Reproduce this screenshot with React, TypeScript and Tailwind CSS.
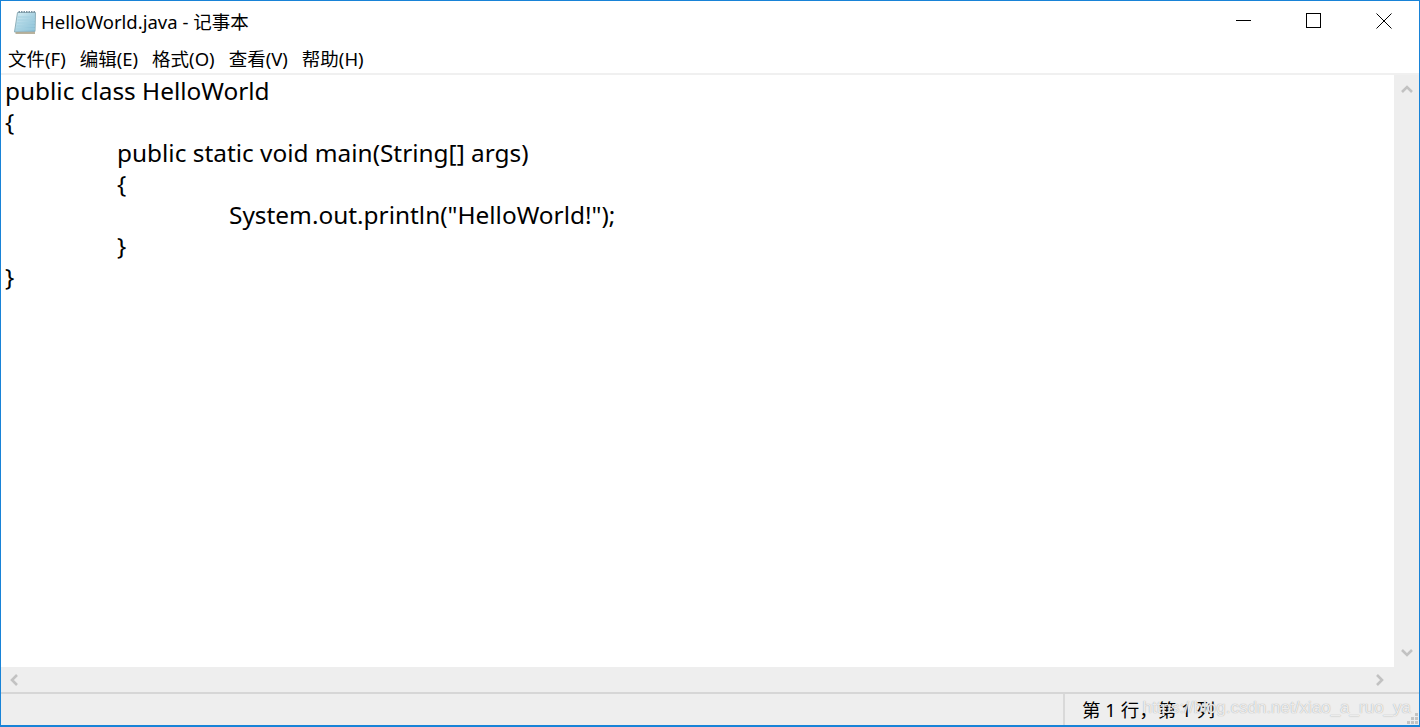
const lines = [
  { text: 'public class HelloWorld', indent: '' },
  { text: '{', indent: '' },
  { text: 'public static void main(String[] args)', indent: 'pl-[112px]' },
  { text: '{', indent: 'pl-[112px]' },
  { text: 'System.out.println("HelloWorld!");', indent: 'pl-[224px]' },
  { text: '}', indent: 'pl-[112px]' },
  { text: '}', indent: '' },
];

const menus = ['文件(F)', '编辑(E)', '格式(O)', '查看(V)', '帮助(H)'];

function NotepadIcon() {
  return (
    <svg width="24" height="26" viewBox="0 0 24 26" className="shrink-0">
      <defs>
        <linearGradient id="page" x1="0" y1="0" x2="1" y2="1">
          <stop offset="0" stopColor="#d8eff5" />
          <stop offset="1" stopColor="#7fb9d2" />
        </linearGradient>
      </defs>
      <path d="M4.5 3.5H22.5L22 22.5L1.5 23Z" fill="url(#page)" stroke="#8fb0ba" strokeWidth="1" />
      <path d="M2.5 24H22" stroke="#a89f85" strokeWidth="1.6" />
      <path d="M5.5 3H22.5" stroke="#7d97a5" strokeWidth="2" strokeDasharray="1.5 1" />
      <path d="M5 8H22M4.5 11H22M4 14H22M3.6 17H22M3.2 20H22" stroke="#a3d0e0" strokeWidth="1" />
    </svg>
  );
}

function Chevron({ d }: { d: string }) {
  return (
    <svg width="12" height="12" viewBox="0 0 12 12">
      <path d={d} fill="none" stroke="#c2c2c2" strokeWidth="2.6" />
    </svg>
  );
}

export default function App() {
  return (
    <div className="relative flex h-[727px] w-[1420px] flex-col overflow-hidden border border-b-2 border-[#1883d7] bg-white font-['Noto_Sans','Noto_Sans_CJK_SC',sans-serif] text-black">
      {/* Title bar */}
      <div className="flex h-[39px] shrink-0 items-center justify-between">
        <div className="flex items-center gap-[4px] pl-[12px] pt-[2px]">
          <NotepadIcon />
          <span className="pt-[2px] text-[18.5px] leading-none">HelloWorld.java - 记事本</span>
        </div>
        <div className="flex items-center">
          <div className="flex h-[39px] w-[70px] items-center justify-center">
            <div className="h-px w-[15px] bg-black" />
          </div>
          <div className="flex h-[39px] w-[70px] items-center justify-center">
            <div className="h-[15px] w-[15px] border border-black" />
          </div>
          <div className="flex h-[39px] w-[71px] items-center justify-center">
            <svg width="16" height="16" viewBox="0 0 16 16">
              <path d="M0.5 0.5L15.5 15.5M15.5 0.5L0.5 15.5" stroke="#000" strokeWidth="1" />
            </svg>
          </div>
        </div>
      </div>

      {/* Menu */}
      <div className="flex h-[33px] shrink-0 items-center gap-[14px] pl-[7px] pt-[4px] text-[18.5px]">
        {menus.map((m) => (
          <span key={m}>{m}</span>
        ))}
      </div>
      <div className="h-[2px] shrink-0 bg-[#f0f0f0]" />

      {/* Editor */}
      <div className="flex min-h-0 flex-1">
        <div className="flex-1 pl-[4px] text-[24.4px] leading-[31px]">
          {lines.map((l, i) => (
            <div key={i} className={`h-[31px] whitespace-pre ${l.indent}`}>
              {l.text}
            </div>
          ))}
        </div>
        <div className="flex w-[25px] shrink-0 flex-col items-center justify-between bg-[#eeeeee] py-[8px]">
          <Chevron d="M1 9L6 4L11 9" />
          <Chevron d="M1 3L6 8L11 3" />
        </div>
      </div>

      {/* Horizontal scrollbar */}
      <div className="flex h-[25px] shrink-0 items-center justify-between bg-[#eeeeee] pl-[7px] pr-[33px]">
        <Chevron d="M9 1L4 6L9 11" />
        <Chevron d="M3 1L8 6L3 11" />
      </div>

      {/* Status bar */}
      <div className="flex h-[33px] shrink-0 items-center justify-end border-t-2 border-[#d6d6d6] bg-[#eeeeee]">
        <div className="flex h-full w-[356px] items-center border-l-2 border-[#d9d9d9] pl-[17px] text-[18.5px]">
          第 1 行，第 1 列
        </div>
      </div>

      {/* Blog watermark over the status bar */}
      <span className="absolute bottom-[5px] right-[8px] text-[17px] leading-[24px] text-white/80 [text-shadow:0_0_1px_#8f8f8f] font-['Liberation_Sans',sans-serif]">
        https://blog.csdn.net/xiao_a_ruo_ya
      </span>
      <svg width="13" height="13" viewBox="0 0 13 13" className="absolute bottom-0 right-0">
        <path d="M9 1h3v3H9zM5 5h3v3H5zM9 5h3v3H9zM1 9h3v3H1zM5 9h3v3H5zM9 9h3v3H9z" fill="#c4c4c4" />
      </svg>
    </div>
  );
}
